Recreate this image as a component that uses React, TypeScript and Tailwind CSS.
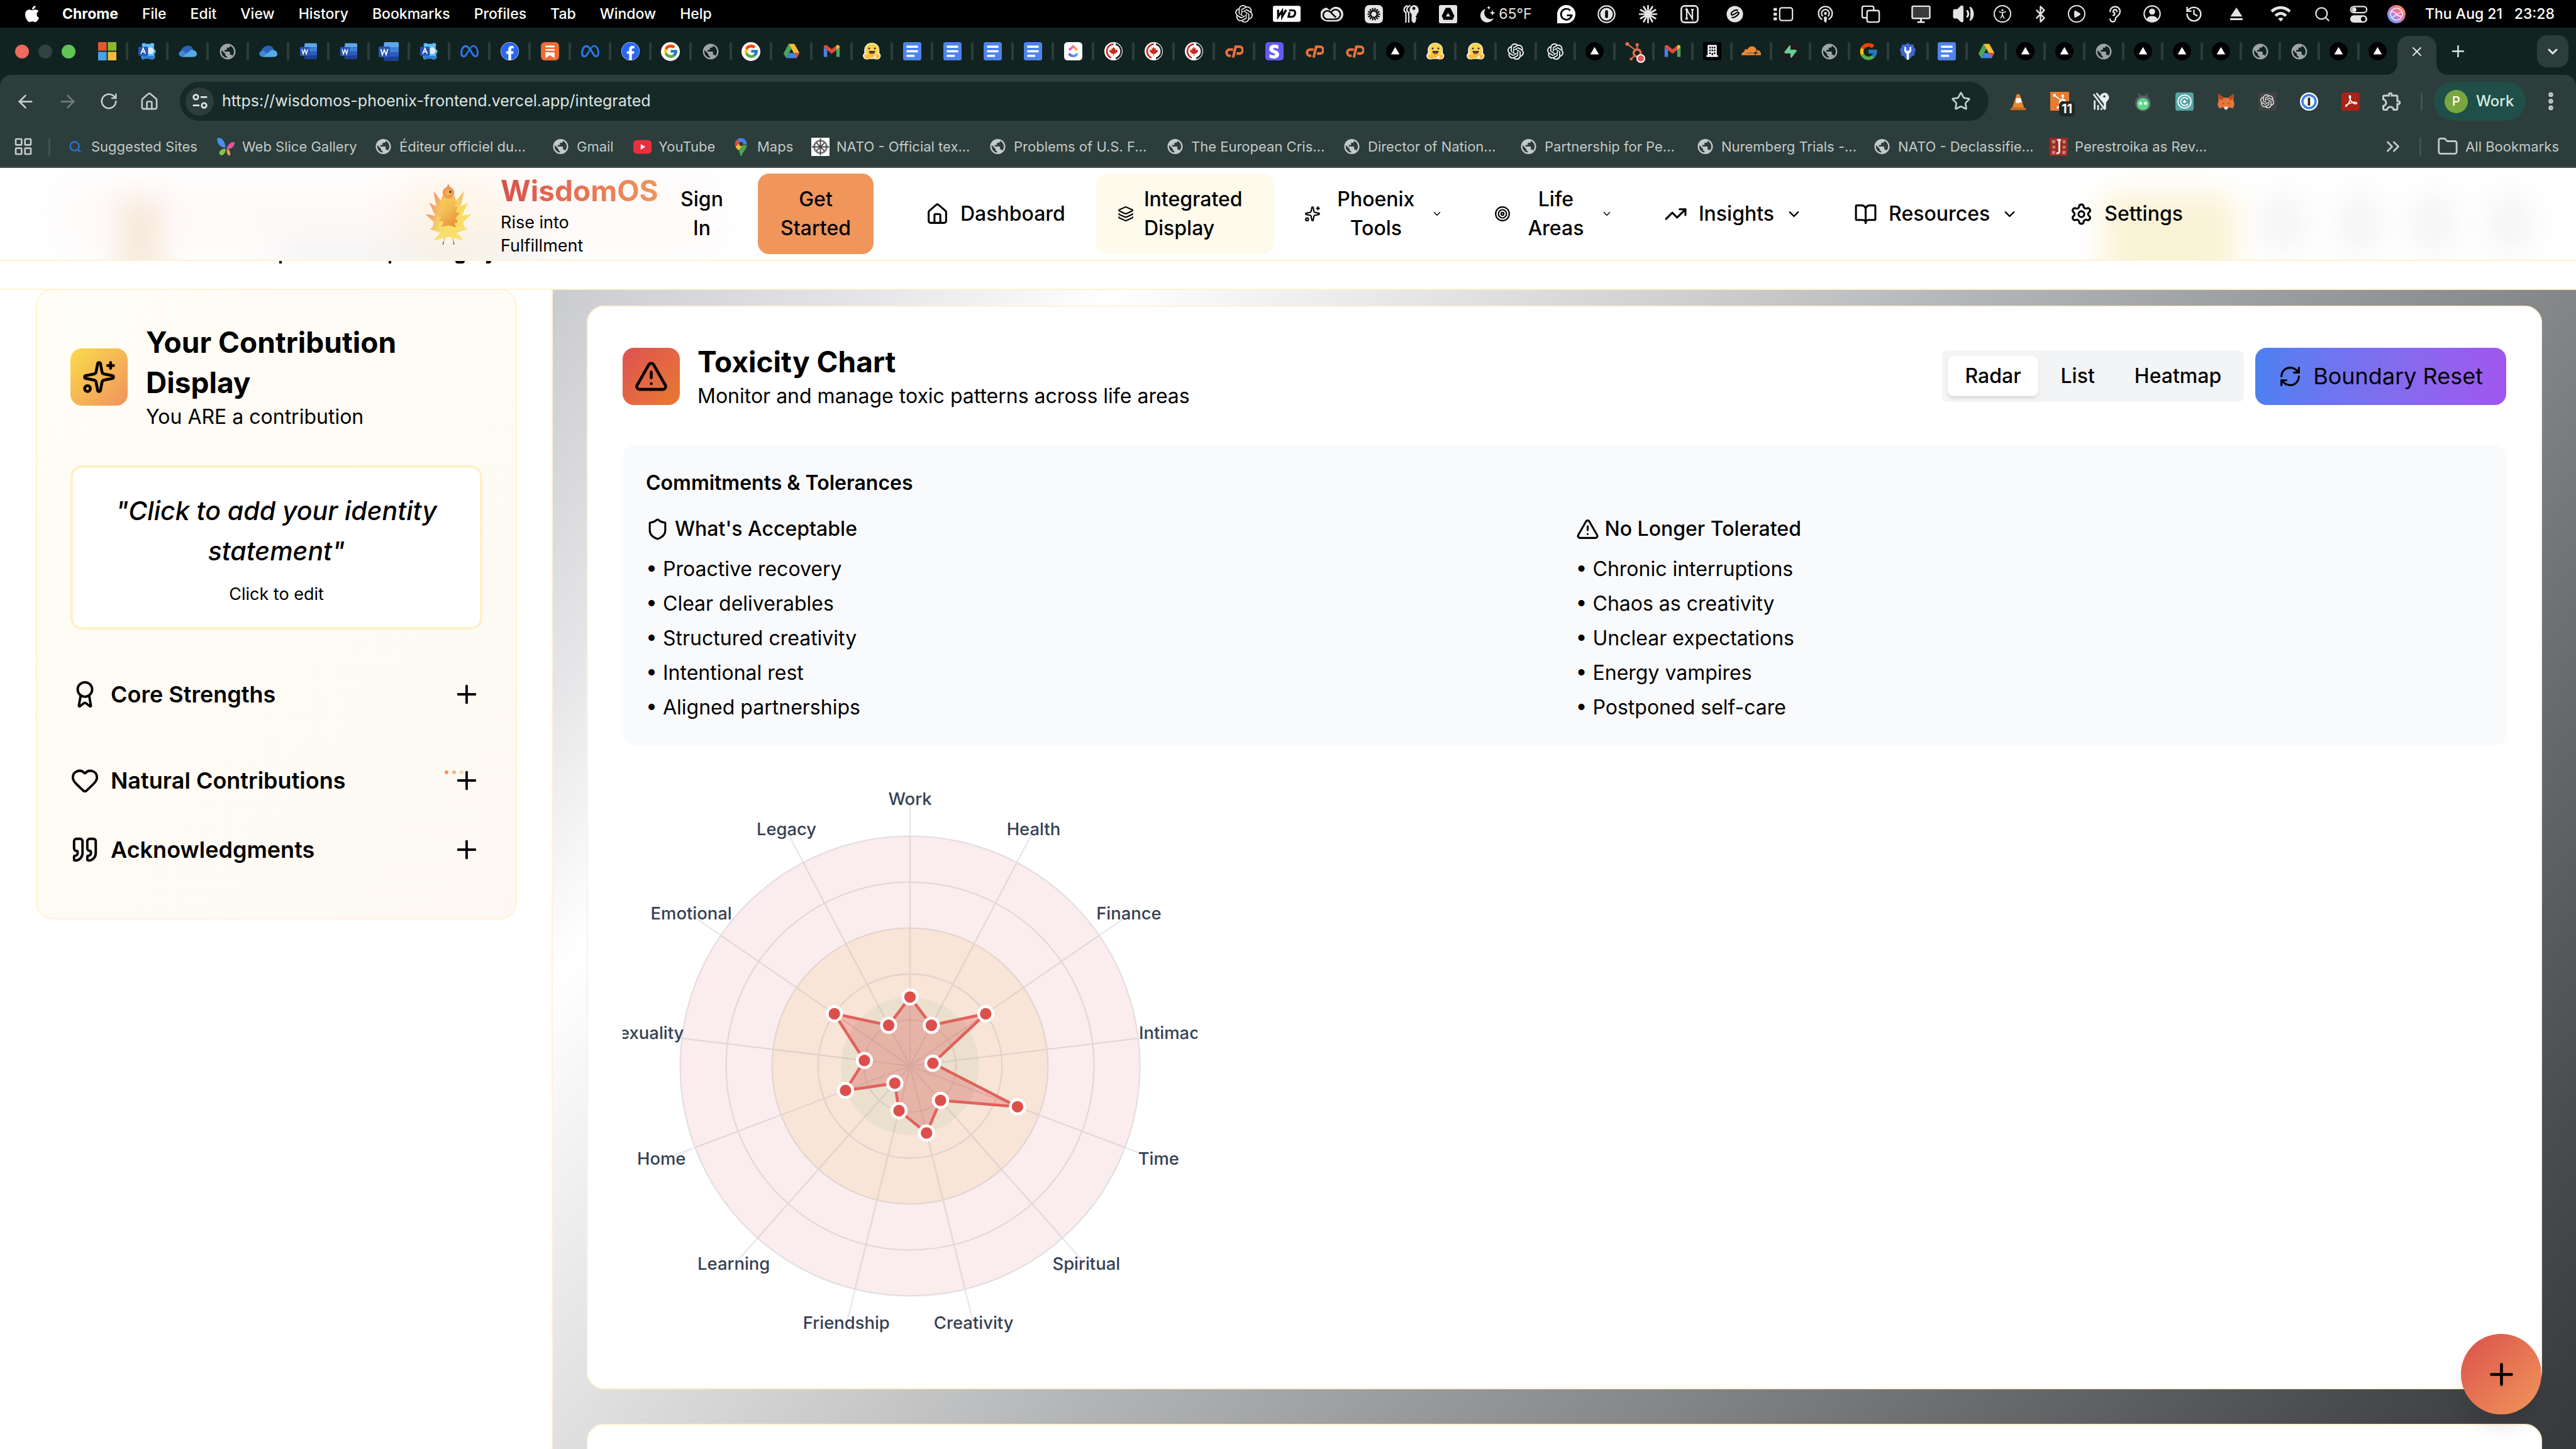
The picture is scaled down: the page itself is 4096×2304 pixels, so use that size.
import React from 'react';
import {
  ArrowLeft, ArrowRight, RotateCw, House, Star, EllipsisVertical, Folder, ChevronsRight, ChevronDown,
  Plus, X, Layers, Sparkles, Target, TrendingUp, BookOpen, Settings, TriangleAlert, RefreshCw, Shield, Award,
  Heart, Quote, Podcast, Volume2, PersonStanding, Bluetooth, Play, Ear, History, Search, LayoutGrid,
} from 'lucide-react';
import { FaApple, FaFacebook, FaStripeS, FaHubspot, FaCloudflare } from 'react-icons/fa';
import { FaMeta } from 'react-icons/fa6';
import { FcGoogle } from 'react-icons/fc';
import { SiOpenai, SiSupabase } from 'react-icons/si';
import { MdPublic, MdEject, MdOutlineExtension } from 'react-icons/md';

/* ---------- favicons ---------- */

const Svg = ({ children, className = 'size-[29px]' }: { children: React.ReactNode; className?: string }) => (
  <svg viewBox="0 0 32 32" className={className} aria-hidden="true">{children}</svg>
);

const Microsoft = () => (
  <Svg><path fill="#e2592f" d="M0 0h15v15H0z" /><path fill="#8bb832" d="M17 0h15v15H17z" /><path fill="#4aa0ec" d="M0 17h15v15H0z" /><path fill="#f6b93b" d="M17 17h15v15H17z" /></Svg>
);
const Autopilot = () => (
  <Svg>
    <path fill="#5fc0f4" d="M6 3l4-2 3 2h8l3-2 4 2-1 8 4 5-3 5 1 7-5 3-4-2h-8l-4 2-3-4 1-7-2-4 3-5z" />
    <path fill="#2f7fd6" d="M8 24h19l1 4-5 3-4-2h-8l-4 2-2-3z" />
    <circle cx="21" cy="15" r="6" fill="#dfeaf4" />
    <rect y="8" width="17" height="16" rx="2" fill="#2455b5" />
    <path d="M4.500 20.500l4-10 4 10M6 17h5" fill="none" stroke="#fff" strokeWidth="1.800" />
  </Svg>
);
const OneDrive = () => (
  <Svg>
    <path fill="#2b63b8" d="M3 17c2-7 8-11 14-11 5 0 8 4 9 8l-10 8z" />
    <path fill="#3f86d8" d="M0 20a7 7 0 0 1 8-5l14 11H7a7 7 0 0 1-7-6z" />
    <path fill="#55abe8" d="M7 26l14-12c6-1 11 2 11 7 0 3-3 5-6 5z" />
  </Svg>
);
const Globe = () => <MdPublic className="size-[30px] text-[#9ea3a6]" />;
const Word = ({ big }: { big?: boolean }) => (
  <Svg className={big ? 'size-[32px]' : 'size-[27px]'}>
    <path fill="#5ea7ea" d="M9 1h21a2 2 0 0 1 2 2v6H8z" /><path fill="#3f7fd4" d="M8 9h24v8H8z" /><path fill="#2c5cc0" d="M8 17h24v7H8z" /><path fill="#1e4094" d="M8 24h24v5a2 2 0 0 1-2 2H10a2 2 0 0 1-2-2z" />
    <rect y="8" width="18" height="17" rx="2" fill="#2455b5" />
    <path d="M3.500 12l2.500 9 3-8 3 8 2.500-9" fill="none" stroke="#fff" strokeWidth="1.800" />
  </Svg>
);
const Meta = () => <FaMeta className="size-[29px] text-[#2f74ee]" />;
const Facebook = () => <span className="rounded-full bg-white"><FaFacebook className="size-[29px] text-[#2a66f4]" /></span>;
const Substack = () => (
  <Svg><rect width="32" height="32" rx="7" fill="#ef6c34" /><path fill="#fff" d="M8 6h16v3H8zM8 12h16v3H8zM8 18h16v10l-8-5-8 5z" /></Svg>
);
const Google = () => <span className="flex size-[30px] items-center justify-center rounded-full bg-white"><FcGoogle className="size-[25px]" /></span>;
const GoogleBare = () => <FcGoogle className="size-[32px]" />;
const Drive = () => (
  <Svg><path fill="#4aa45a" d="M11 3l5 8.500L7 28 2 20z" /><path fill="#f5bf2f" d="M11 3h10l9 16H20z" /><path fill="#4a7fe8" d="M12 19h18l-5 9H7z" /><path fill="#dc4c3e" d="M21 19h9l-5 9z" /></Svg>
);
const Gmail = () => (
  <Svg><path fill="#4a80ec" d="M2 9v17h6V14z" /><path fill="#4aa45a" d="M30 9v17h-6V14z" /><path fill="#dc4c3e" d="M2 9c0-4 4-5 6-3l8 6.500L24 6v8l-8 6.500L8 14z" /><path fill="#f5bf2f" d="M24 6c2-2 6-1 6 3l-6 5z" /></Svg>
);
const Hugging = () => (
  <Svg>
    <path fill="#fff" d="M16 1a13 13 0 0 1 13 13c0 2 0 4-.500 5 3 2 3.500 5 2 8-2 4-8 4-11 2.500h-7C9 31 3 31 1 27c-1.500-3-1-6 2-8-.500-1-.500-3-.500-5A13 13 0 0 1 16 1z" />
    <circle cx="16" cy="14" r="12" fill="#fbd34c" />
    <path fill="#f8bd45" d="M2 24c0-3 3-4 5-2l3-1c3 1 4 5 2 8-3 2-9 1-10-5zM30 24c0-3-3-4-5-2l-3-1c-3 1-4 5-2 8 3 2 9 1 10-5zM9 20h14v8H9z" />
    <path d="M10.500 15.500a5.500 5.500 0 0 0 11 0z" fill="#3a3030" /><path d="M13.500 19q2.500-2 5 0-2.500 2-5 0z" fill="#e5484d" />
    <circle cx="11" cy="11" r="1.700" fill="#3a3030" /><circle cx="21" cy="11" r="1.700" fill="#3a3030" />
  </Svg>
);
const Docs = () => (
  <Svg><rect width="32" height="32" rx="4" fill="#4f83ec" /><path fill="#fff" d="M6 6h20v4H6zM6 14h20v4H6zM6 22h14v4H6z" /></Svg>
);
const ClickUp = () => (
  <Svg>
    <defs>
      <linearGradient id="cu1"><stop stopColor="#e642c8" /><stop offset="1" stopColor="#f8b63c" /></linearGradient>
      <linearGradient id="cu2"><stop stopColor="#7a4cf0" /><stop offset="1" stopColor="#4fb8f5" /></linearGradient>
    </defs>
    <rect width="32" height="32" rx="6" fill="#fff" />
    <path d="M9 14l7-6.500 7 6.500" fill="none" stroke="url(#cu1)" strokeWidth="4" /><path d="M8.500 20c4 6 11 6 15 0" fill="none" stroke="url(#cu2)" strokeWidth="4" />
  </Svg>
);
const Maple = () => (
  <Svg>
    <circle cx="16" cy="16" r="16" fill="#fff" /><path d="M20 3.500a13 13 0 0 1 0 25" fill="none" stroke="#222" strokeWidth="3" /><path d="M16 3.500a12.500 12.500 0 0 0-4 24" fill="none" stroke="#c8281f" strokeWidth="3" />
    <path fill="#c8281f" d="M16 8l2 3.500 2-1-1 4 3-1.500 1.500 3-4.500 4.500h-2.500V24h-1v-3.500H13L8.500 16l1.500-3 3 1.500-1-4 2 1z" />
  </Svg>
);
const CPanel = () => (
  <Svg><path d="M14 13H8a5.500 5.500 0 0 0 0 11h2M14 27l4.500-19H25a5 5 0 0 1 0 12h-5" fill="none" stroke="#ed723b" strokeWidth="4.500" /></Svg>
);
const Stripe = () => <span className="flex size-[29px] items-center justify-center rounded-[5px] bg-[#635bf5]"><FaStripeS className="size-[22px] text-white" /></span>;
const Vercel = () => (
  <Svg><circle cx="16" cy="16" r="16" fill="#000" /><path fill="#fff" d="M16 8.500l7.500 13h-15z" /></Svg>
);
const OpenAi = () => <SiOpenai className="size-[26px] text-white" />;
const HubSpot = () => (
  <span className="relative"><FaHubspot className="size-[29px] text-[#e2714c]" /><span className="absolute -right-1 -bottom-1 size-3.5 rounded-full border-2 border-white bg-[#e05656]" /></span>
);
const Building = () => (
  <Svg><path fill="#000" d="M0 0h32v32H0z" /><path fill="#fff" d="M8 5h16v18h2v3H6v-3h2z" /><path fill="#000" d="M11 8h2.500v3H11zM15 8h2.500v3H15zM19 8h2.500v3H19zM11 13h2.500v3H11zM15 13h2.500v3H15zM19 13h2.500v3H19zM11 18h2.500v3H11zM19 18h2.500v3H19zM15 19h2.500v4H15z" /></Svg>
);
const Cloudflare = () => <FaCloudflare className="size-[31px] text-[#e8893a]" />;
const Supabase = () => <span className="flex size-[29px] items-center justify-center rounded-[4px] bg-[#1c1c1c]"><SiSupabase className="size-[20px] text-[#63cf92]" /></span>;
const Wrench = () => (
  <Svg><path fill="#3f66cf" d="M16 1l4 3 6 0 1 5 3 4-2 5 0 5-5 2-3 4H12l-3-4-5-2 0-5-2-5 3-4 1-5h6z" /><path fill="#fff" d="M10 8v7a6 6 0 0 0 4 5v11h4V20a6 6 0 0 0 4-5V8l-3 1v6h-6V9z" /></Svg>
);

const leftTabs = [
  Microsoft, Autopilot, OneDrive, Globe, OneDrive, Word, Word, () => <Word big />, Autopilot, Meta, Facebook, Substack,
  Meta, Facebook, Google, Globe, Google, Drive, Gmail, Hugging, Docs, Docs, Docs, Docs, ClickUp, Maple, Maple, Maple,
  CPanel, Stripe, CPanel, CPanel, Vercel, Hugging, Hugging, OpenAi,
];
const rightTabs = [
  OpenAi, Vercel, HubSpot, Gmail, Building, Cloudflare, Supabase, Globe, GoogleBare, Wrench, Docs, Drive, Vercel, Vercel,
  Globe, Vercel, Vercel, Vercel, Globe, Globe, Vercel, Vercel,
];

/* ---------- macOS menu bar ---------- */

const lt = '#e4e4e4';
const spokes = (n: number, inner: number, outer: number) =>
  Array.from({ length: n }, (_, i) => {
    const a = (i / n) * Math.PI * 2;
    return `M${16 + inner * Math.cos(a)} ${16 + inner * Math.sin(a)}L${16 + outer * Math.cos(a)} ${16 + outer * Math.sin(a)}`;
  }).join('');

const menuIcons: { w: string; el: React.ReactNode }[] = [
  { w: 'w-15', el: <SiOpenai className="size-[28px]" /> },
  {
    w: 'w-19', el: (
      <svg viewBox="0 0 48 28" className="h-[26px] w-[44px]" aria-hidden="true"><rect width="48" height="28" rx="3" fill="#fff" />
        <path d="M9 7l0 12 7-10 0 10 7-12M28 8h7c6 0 4 11-2 11h-6l2-8" fill="none" stroke="#000" strokeWidth="3.500" /></svg>
    ),
  },
  {
    w: 'w-17', el: (
      <svg viewBox="0 0 40 30" className="h-[27px] w-[36px]" fill="none" aria-hidden="true">
        <path d="M11 3.500A11.500 11.500 0 0 0 12 28h15a13 13 0 1 0-11-20c-2-2-4-3-5-4.500z" fill={lt} />
        <path d="M17 24h-5a7.500 7.500 0 1 1 5-13l10 10M16 24h10a8.500 8.500 0 1 0-7-13" stroke="#000" strokeWidth="2.600" />
      </svg>
    ),
  },
  { w: 'w-16', el: <Svg><rect width="32" height="32" rx="8" fill={lt} /><path d={spokes(14, 4.500, 11)} stroke="#000" strokeWidth="2.400" /></Svg> },
  {
    w: 'w-14', el: (
      <Svg><g fill="none" stroke={lt} strokeWidth="2.500"><path d="M9 1C2 3 1 11 6 13v18M14 1C7 3 6 11 11 13v18" /></g>
        <path fill={lt} d="M20 0a9 9 0 0 1 5 16v2l-2 2.500 2 3-2 3 1 2-4 3.500-4-4V16a9 9 0 0 1 4-16z" /><circle cx="20" cy="6" r="2.600" fill="#000" /></Svg>
    ),
  },
  { w: 'w-15', el: <Svg><rect width="32" height="32" rx="3" fill={lt} /><path fill="#000" d="M12 5h8l7 14-3 7H8l-3-7z" /><path fill={lt} d="M16 14l4 6h-8z" /></Svg> },
  {
    w: 'w-31', el: (
      <span className="flex items-center gap-1">
        <Svg className="size-[27px]"><path fill={lt} d="M12 6a13 13 0 1 0 15 18A12 12 0 0 1 12 6z" /><path fill={lt} d="M25 8l1.500 4 4 1.500-4 1.500L25 19l-1.500-4-4-1.500 4-1.500zM18 0l1 2.500L21.500 4 19 5l-1 3-1-3-2.500-1L17 2.500z" /></Svg>
        <span>65°F</span>
      </span>
    ),
  },
  {
    w: 'w-17', el: (
      <Svg><path fill="#fff" d="M16 0a16 16 0 1 1 0 32H0V16A16 16 0 0 1 16 0z" /><path d="M23 9.500A9.500 9.500 0 1 0 25.500 18H17" fill="none" stroke="#000" strokeWidth="3" /></Svg>
    ),
  },
  { w: 'w-15', el: <Svg><circle cx="16" cy="16" r="14.500" fill="none" stroke={lt} strokeWidth="2.500" /><circle cx="16" cy="16" r="11" fill={lt} /><rect x="13.500" y="9" width="5" height="14" rx="2" fill="#000" /></Svg> },
  { w: 'w-18', el: <Svg><path d={spokes(12, 1, 15)} stroke={lt} strokeWidth="3" strokeLinecap="round" /></Svg> },
  { w: 'w-15', el: <Svg><rect x="1.500" y="1.500" width="29" height="29" rx="6" fill="none" stroke={lt} strokeWidth="3" /><path d="M11 24V8l10 16V8M8.500 8h5M18.500 8h5M8.500 24h5" fill="none" stroke={lt} strokeWidth="2.600" /></Svg> },
  { w: 'w-21', el: <Svg className="size-[27px]"><circle cx="16" cy="16" r="15.500" fill={lt} /><path d="M22 9c-4-2-8 0-11 3s-2 7 2 5l7-4c3-2 5 1 2 4s-7 7-12 5" fill="none" stroke="#000" strokeWidth="2.500" /></Svg> },
  { w: 'w-18', el: <svg viewBox="0 0 36 26" className="h-[23px] w-[32px]" aria-hidden="true"><rect x="11" y="1.500" width="23" height="23" rx="4" fill="none" stroke={lt} strokeWidth="2.500" /><path fill={lt} d="M0 2h6v5H0zM0 10.500h6v5H0zM0 19h6v5H0z" /></svg> },
  { w: 'w-15', el: <Podcast className="size-[29px]" /> },
  { w: 'w-21', el: <Svg className="size-[31px]"><rect x="2" y="3" width="19" height="19" rx="3" fill="none" stroke={lt} strokeWidth="2.500" /><rect x="10" y="10" width="20" height="19" rx="3" fill="#000" stroke={lt} strokeWidth="2.500" /></Svg> },
  { w: 'w-19', el: <Svg className="size-[31px]"><rect x="1.500" y="3" width="29" height="20" rx="2" fill="#3a3a3a" stroke={lt} strokeWidth="2.500" /><path d="M10 29h12M16 23v6" stroke={lt} strokeWidth="3" /></Svg> },
  { w: 'w-15', el: <Volume2 className="size-[36px] fill-[#e4e4e4]" /> },
  { w: 'w-16', el: <span className="flex size-[28px] items-center justify-center rounded-full border-2 border-[#e4e4e4]"><PersonStanding className="size-[20px]" /></span> },
  { w: 'w-14', el: <Bluetooth className="size-[29px]" /> },
  { w: 'w-15', el: <span className="flex size-[28px] items-center justify-center rounded-full border-2 border-[#e4e4e4]"><Play className="size-[13px] fill-[#e4e4e4]" /></span> },
  { w: 'w-15', el: <Ear className="size-[29px]" /> },
  { w: 'w-15', el: <Svg className="size-[28px]"><circle cx="16" cy="16" r="14.500" fill="none" stroke={lt} strokeWidth="2.500" /><circle cx="16" cy="12" r="5.500" fill={lt} /><path fill={lt} d="M6 26c2-8 18-8 20 0a14 14 0 0 1-20 0z" /></Svg> },
  { w: 'w-18', el: <History className="size-[29px]" /> },
  { w: 'w-16', el: <MdEject className="size-[34px]" /> },
  { w: 'w-19', el: <Svg className="size-[33px]"><g fill="none" stroke={lt} strokeWidth="4.500"><path d="M2 12c8-8 20-8 28 0" /><path d="M8 18.500c5-5 11-5 16 0" /></g><path fill={lt} d="M12 23c2-2 6-2 8 0l-4 4.500z" /></Svg> },
  { w: 'w-14', el: <Search className="size-[27px]" /> },
  { w: 'w-15', el: <Svg className="size-[29px]"><rect x="2" y="2.500" width="28" height="11" rx="5.500" fill="none" stroke={lt} strokeWidth="2.500" /><circle cx="8" cy="8" r="4" fill={lt} /><rect x="1" y="18" width="30" height="13" rx="6.500" fill={lt} /><circle cx="24" cy="24.500" r="4" fill="#000" /></Svg> },
  {
    w: 'w-15', el: (
      <Svg className="size-[29px]">
        <defs><linearGradient id="siri" x1="0" y1="1" x2="1" y2="0"><stop stopColor="#3fb0f0" /><stop offset=".35" stopColor="#a98ae8" /><stop offset=".6" stopColor="#ee6f9c" /><stop offset="1" stopColor="#f5a742" /></linearGradient></defs>
        <circle cx="16" cy="16" r="16" fill="url(#siri)" /><circle cx="16" cy="16" r="10.500" fill="none" stroke="#fff" strokeWidth="1.800" opacity=".85" /><path d="M7 12c5-2 7 2 9 4s6 5 9 3M8 22c4-1 11-10 17-9" fill="none" stroke="#fff" strokeWidth="1.800" opacity=".85" />
      </Svg>
    ),
  },
];

const MenuBar = () => (
  <div className="flex h-[44px] shrink-0 items-center bg-black pr-[34px] pl-[36px] text-[23px] leading-8 text-white">
    <FaApple className="mr-[33px] size-[30px]" />
    <nav aria-label="Menu bar" className="flex gap-[38px]">
      <button className="font-bold">Chrome</button>
      {['File', 'Edit', 'View', 'History', 'Bookmarks', 'Profiles', 'Tab', 'Window', 'Help'].map((m) => <button key={m} className="font-medium">{m}</button>)}
    </nav>
    <div className="ml-auto flex items-center text-[#e4e4e4]">
      {menuIcons.map(({ w, el }, i) => <span key={i} className={`flex shrink-0 items-center justify-center ${w}`}>{el}</span>)}
      <span className="ml-4 flex w-[206px] justify-between font-medium whitespace-nowrap text-white"><span>Thu Aug 21</span><span>23:28</span></span>
    </div>
  </div>
);

/* ---------- browser chrome ---------- */

const TabStrip = () => (
  <div className="flex h-[75px] shrink-0 items-center bg-[#112321]">
    <div className="flex w-[138px] items-center gap-[15px] pl-[24px]">
      <span className="size-[22px] rounded-full bg-[#ed6a5e]" />
      <span className="size-[22px] rounded-full bg-[#33413f]" />
      <span className="size-[22px] rounded-full bg-[#61c554]" />
    </div>
    {leftTabs.map((Icon, i) => (
      <span key={i} className="relative flex w-16 shrink-0 items-center justify-center"><Icon /><span className="absolute -right-0.5 h-[29px] w-1 rounded-full bg-[#2c3d3b]" /></span>
    ))}
    <div className="flex flex-1 items-center">
      {rightTabs.map((Icon, i) => (
        <span key={i} className="relative flex flex-1 items-center justify-center"><Icon />{i < rightTabs.length - 1 && <span className="absolute -right-0.5 h-[29px] w-1 rounded-full bg-[#2c3d3b]" />}</span>
      ))}
    </div>
    <div className="flex w-[284px] shrink-0 items-center self-stretch text-[#dfe9e6]">
      <div className="relative mt-[13px] flex w-[62px] items-center justify-center self-stretch rounded-t-[18px] bg-[#2c3d3b] pb-3">
        <span className="absolute bottom-0 -left-[18px] size-[18px] bg-[radial-gradient(circle_at_top_left,transparent_18px,#2c3d3b_18px)]" />
        <span className="absolute -right-[18px] bottom-0 size-[18px] bg-[radial-gradient(circle_at_top_right,transparent_18px,#2c3d3b_18px)]" />
        <button aria-label="Close tab"><X className="size-[24px]" /></button>
      </div>
      <button aria-label="New tab" className="ml-[20px]"><Plus className="size-[29px]" /></button>
      <button aria-label="Search tabs" className="mr-[12px] ml-auto flex h-[51px] w-[50px] items-center justify-center rounded-[16px] bg-[#2c3d3b]"><ChevronDown className="size-[24px]" strokeWidth={3} /></button>
    </div>
  </div>
);

const extensions: [string, React.ReactNode][] = [
  ['VLC', <Svg><path fill="#e8872e" d="M13 3h5l8 24H5z" /><path fill="#fff" d="M12 10h8l2 7-9 2-2-3z" /><path fill="#c9691e" d="M2 27h27v4H2z" /></Svg>],
  ['HubSpot', <span className="relative flex size-[30px] items-center justify-center bg-[#e97b2e]"><FaHubspot className="size-[24px] text-white" /><span className="absolute top-[15px] left-[14px] rounded-[6px] bg-[#1c2826] px-1 text-[20px] leading-6 font-bold text-white">11</span></span>],
  ['Passwords', <Svg><path fill="#e8eeec" d="M19 1a8 8 0 0 1 7 14l-2 3v11l-4 2V18l-6-6A8 8 0 0 1 19 1z" /><path d="M2 3l20 27M7 1l16 20M4 14v16M10 22v9M16 27v4" stroke="#e8eeec" strokeWidth="3" fill="none" /><circle cx="21" cy="7" r="2" fill="#2c3d3b" /></Svg>],
  ['Android helper', <Svg className="size-[31px]"><path d="M9 3l3 6M23 3l-3 6" stroke="#55616e" strokeWidth="2.500" /><circle cx="16" cy="19" r="13" fill="#55616e" /><circle cx="16" cy="20" r="10" fill="#62d487" /><circle cx="12" cy="19" r="2.500" fill="#fff" /><circle cx="20" cy="19" r="2.500" fill="#fff" /></Svg>],
  ['Recorder', <Svg><rect width="32" height="32" rx="4" fill="#56a3a6" /><circle cx="16" cy="16" r="11.500" fill="none" stroke="#fff" strokeWidth="2" /><path d="M22 12a7 7 0 1 0 0 8" fill="none" stroke="#fff" strokeWidth="2" /><circle cx="16" cy="16" r="2.500" fill="#fff" /></Svg>],
  ['MetaMask', <Svg><path fill="#e8753c" d="M2 2l10 7h8l10-7-1 13 2 6-3 7-7-2-3 3h-4l-3-3-7 2-3-7 2-6z" /><path fill="#b84a20" d="M2 2l10 7-3 5-6-3zM30 2l-10 7 3 5 6-3zM10 17l4 3-4 1zM22 17l-4 3 4 1z" /><path fill="#e9e3dc" d="M12 25h8l-2 5h-4z" /></Svg>],
  ['ChatGPT', <span className="flex size-[29px] items-center justify-center bg-[#424242]"><SiOpenai className="size-[22px] text-[#e6e6e6]" /></span>],
  ['1Password', <Svg><circle cx="16" cy="16" r="16" fill="#fff" /><circle cx="16" cy="16" r="11.500" fill="#fff" stroke="#3c83ea" strokeWidth="4" /><path fill="#222" d="M14 9h4v14h-4z" /></Svg>],
  ['Acrobat', <Svg><rect width="32" height="32" rx="4" fill="#a62418" /><path d="M7 25c4-2 9-10 9-17 0-3-3-3-2 0 1 6 6 12 11 12 3 0 2-3-1-3-6 0-12 3-17 6" fill="none" stroke="#fff" strokeWidth="2" /></Svg>],
];

const Toolbar = () => (
  <div className="flex h-[84px] shrink-0 items-center pl-[24px] text-[#c3cfcb]">
    <div className="flex w-[262px] gap-[34px]">
      <button aria-label="Back"><ArrowLeft className="size-[33px]" /></button>
      <button aria-label="Forward" className="text-[#6f7d7a]"><ArrowRight className="size-[33px]" /></button>
      <button aria-label="Reload"><RotateCw className="size-[30px]" /></button>
      <button aria-label="Home"><House className="size-[31px]" /></button>
    </div>
    <div className="flex h-[62px] flex-1 items-center rounded-full bg-[#172927] pr-[28px] pl-[9px]">
      <button aria-label="Site information" className="flex size-[45px] items-center justify-center rounded-full bg-[#2c3d3b]">
        <Svg className="size-[30px]"><g fill="none" stroke="#dfe7e4" strokeWidth="3"><circle cx="9" cy="9" r="4" /><path d="M17 9h11M4 23h11" /><circle cx="23" cy="23" r="4" /></g></Svg>
      </button>
      <input aria-label="Address" defaultValue="https://wisdomos-phoenix-frontend.vercel.app/integrated" className="ml-[13px] min-w-0 flex-1 bg-transparent text-[25px] text-[#dde4e2] outline-none" />
      <button aria-label="Bookmark this tab"><Star className="size-[32px]" /></button>
    </div>
    <div className="ml-[14px] flex items-center">
      {extensions.map(([name, el]) => <button key={name} aria-label={name} className="flex w-[66px] items-center justify-center">{el}</button>)}
      <button aria-label="Extensions" className="flex w-[66px] items-center justify-center"><MdOutlineExtension className="size-[36px]" /></button>
    </div>
    <span className="ml-[13px] h-[29px] w-[3px] rounded-full bg-[#43534f]" />
    <button className="ml-[18px] flex h-[62px] w-[146px] items-center gap-[13px] rounded-full bg-[#204e48] pl-[17px] text-[24px] font-medium text-[#d5ebe5]">
      <span className="flex size-[37px] items-center justify-center rounded-full bg-[#7aa63f] text-[20px] text-white">P</span>Work
    </button>
    <button aria-label="More" className="mx-[22px]"><EllipsisVertical className="size-[36px]" strokeWidth={3} /></button>
  </div>
);

const PageGlobe = () => <MdPublic className="size-[30px] text-[#c3c8c8]" />;
const bookmarks: { w: string; label: string; icon: React.ReactNode }[] = [
  { w: 'w-[240px]', label: 'Suggested Sites', icon: <Search className="size-[21px] text-[#2f6fcf]" strokeWidth={3} /> },
  { w: 'w-[250px]', label: 'Web Slice Gallery', icon: <Svg><path fill="#4a90e8" d="M0 2c5-5 14 2 15 15-7 1-14-4-15-15z" /><path fill="#e0559a" d="M31 8c-6-2-13 4-14 12 8 1 14-5 14-12z" /><path fill="#8bc34a" d="M4 28c0-6 5-9 11-9 1 6-3 12-8 12z" /><path fill="#f0a048" d="M17 20c5 0 7 5 6 11-4 1-6-4-6-11z" /></Svg> },
  { w: 'w-[282px]', label: 'Éditeur officiel du...', icon: <PageGlobe /> },
  { w: 'w-[130px]', label: 'Gmail', icon: <PageGlobe /> },
  { w: 'w-[157px]', label: 'YouTube', icon: <Svg><rect y="4" width="32" height="24" rx="6" fill="#e8303c" /><path fill="#fff" d="M13 11l8 5-8 5z" /></Svg> },
  { w: 'w-[126px]', label: 'Maps', icon: <Svg><path fill="#4aa45a" d="M6 16l6 6 3 10h2c1-8 9-11 9-20z" /><path fill="#f5bf2f" d="M6 16l5 6 9-10-9-2z" /><path fill="#dc4c3e" d="M6 16C4 10 6 5 9 3l5 6z" /><path fill="#4a80ec" d="M9 3c6-5 16-2 17 8l-10 1z" /><circle cx="16" cy="11" r="3.500" fill="#2c3d3b" /></Svg> },
  { w: 'w-[282px]', label: 'NATO - Official tex...', icon: <Svg><path fill="#fff" d="M0 0h32v32H0z" /><circle cx="16" cy="16" r="11" fill="none" stroke="#777" strokeWidth="3" /><path d="M16 1v30M1 16h30M9 9l14 14M23 9L9 23" stroke="#444" strokeWidth="2" /></Svg> },
  { w: 'w-[282px]', label: 'Problems of U.S. F...', icon: <PageGlobe /> },
  { w: 'w-[281px]', label: 'The European Cris...', icon: <PageGlobe /> },
  { w: 'w-[281px]', label: 'Director of Nation...', icon: <PageGlobe /> },
  { w: 'w-[281px]', label: 'Partnership for Pe...', icon: <PageGlobe /> },
  { w: 'w-[281px]', label: 'Nuremberg Trials -...', icon: <PageGlobe /> },
  { w: 'w-[281px]', label: 'NATO - Declassifie...', icon: <PageGlobe /> },
  { w: 'w-[281px]', label: 'Perestroika as Rev...', icon: <Svg><path fill="#9c2a20" d="M0 0h32v32H0z" /><path d="M4 4h6v6H4zM5 14h5v5H5zM4 23h6v6H4zM23 4h5v6h-5zM23 14h5v5h-5zM22 23h6v6h-6z" fill="#c58078" /><path d="M13 4h7M17 4v20q0 4-5 3" stroke="#f3e3e0" strokeWidth="3.500" fill="none" /></Svg> },
];

const BookmarksBar = () => (
  <div className="flex h-[64px] shrink-0 items-center border-b-2 border-[#434e48] pr-[27px] pb-[2px] pl-[21px] text-[22px] text-[#c3c9c8]">
    <LayoutGrid className="size-[32px]" />
    <span className="mr-[25px] ml-[24px] h-[29px] w-[3px] rounded-full bg-[#43534f]" />
    <nav aria-label="Bookmarks" className="flex">
      {bookmarks.map((b) => (
        <a key={b.label} href="#bookmark" className={`flex items-center gap-[11px] whitespace-nowrap ${b.w}`}>
          <span className="flex w-[29px] shrink-0 justify-center">{b.icon}</span>{b.label}
        </a>
      ))}
    </nav>
    <button aria-label="More bookmarks" className="ml-auto"><ChevronsRight className="size-[34px]" /></button>
    <span className="mx-[25px] h-[29px] w-[3px] rounded-full bg-[#43534f]" />
    <button className="flex items-center gap-[11px] whitespace-nowrap"><Folder className="size-[34px]" />All Bookmarks</button>
  </div>
);

/* ---------- site header ---------- */

const Phoenix = () => (
  <svg viewBox="120 86 242 324" className="h-[99px] w-[74px]" aria-label="Phoenix">
    <defs>
      <linearGradient id="wing" x1="0" y1="0.200" x2="0.700" y2="0.750"><stop stopColor="#ee8070" /><stop offset=".5" stopColor="#f3b268" /><stop offset="1" stopColor="#f8e068" /></linearGradient>
      <linearGradient id="wingR" x1="0" y1="0" x2="0.300" y2="1"><stop stopColor="#f3b06a" /><stop offset=".5" stopColor="#f7dc62" /><stop offset="1" stopColor="#fae070" /></linearGradient>
      <linearGradient id="body" x1="0" y1="0" x2="0.700" y2="1"><stop stopColor="#f7d548" /><stop offset=".5" stopColor="#f2bb55" /><stop offset="1" stopColor="#ea8f38" /></linearGradient>
      <radialGradient id="head"><stop stopColor="#f5bb3c" /><stop offset="1" stopColor="#ee9058" /></radialGradient>
    </defs>
    <path fill="url(#wing)" d="M241 150L211 150L202 178L163 128L178 208L142 188L172 256L122 248L165 290L160 315L143 325L198 345L164 385L241 366z" />
    <path fill="url(#wingR)" d="M241 150L271 150L282 178L322 128L306 208L342 188L312 256L360 248L318 290L324 315L342 325L285 345L320 385L241 366z" />
    <path fill="url(#body)" d="M241 164L228 176L202 178L208 206L192 212L204 236L183 243L202 266L190 284L216 288L205 315L241 306L281 316L272 296L292 288L278 268L300 243L278 236L290 212L274 206L277 180L254 176z" />
    <path fill="#f0926a" d="M240 88L250 112L232 112z" />
    <circle cx="241" cy="136" r="30" fill="url(#head)" /><circle cx="251" cy="132" r="6" fill="#333a48" />
    <path d="M222 372l-6 20M262 372l5 20" stroke="#e8823c" strokeWidth="3" fill="none" /><path d="M216 392l-4 15M267 392l4 15" stroke="#444" strokeWidth="4" />
  </svg>
);

const navBase = 'flex h-[128px] items-center rounded-[18px] px-[34px] gap-[18px]';
const SiteHeader = () => (
  <header className="relative flex h-[148px] shrink-0 items-center overflow-hidden border-b-2 border-[#fff3d2] bg-white pl-[676px] text-[32px] leading-[46px] font-medium">
    <div aria-hidden="true" className="absolute inset-0">
      <div className="absolute top-6 left-24 h-28 w-[1040px] bg-[#fdf3f1] opacity-50 blur-[40px]" />
      <div className="absolute top-12 left-[188px] h-40 w-[70px] bg-[#f0d8bb] opacity-50 blur-[22px]" />
      <div className="absolute top-2 left-[620px] h-40 w-[200px] rounded-full bg-[#fff0d8] opacity-50 blur-[30px]" />
      <div className="absolute top-28 left-[440px] h-16 w-[420px] bg-[#d4dbdb] opacity-25 blur-[30px]" />
      <div className="absolute top-10 left-[3345px] h-40 w-[210px] bg-[#f7eab9] opacity-60 blur-[24px]" />
      <div className="absolute top-10 left-[3596px] flex gap-[50px]">
        {[0, 1, 2, 3].map((i) => <span key={i} className="h-24 w-[70px] rounded-full bg-[#e2e3e5] opacity-40 blur-[24px]" />)}
      </div>
    </div>
    <div className="relative flex items-center">
      <a href="#home" className="flex items-center gap-[46px]">
        <Phoenix />
        <span className="flex w-[247px] flex-col">
          <span className="w-fit bg-linear-to-r from-[#d94f4b] to-[#f0965b] bg-clip-text text-[46px] leading-[64px] font-bold text-transparent">WisdomOS</span>
          <span className="w-[160px] text-[27px] leading-[37px] font-normal">Rise into Fulfillment</span>
        </span>
      </a>
      <button className="ml-[38px] w-[70px]">Sign In</button>
      <button className="ml-[54px] h-[128px] w-[184px] rounded-[18px] bg-[#f0965b] px-7">Get Started</button>
      <nav aria-label="Main" className="ml-[49px] flex gap-[14px]">
        <a href="#dashboard" className={navBase}><House className="size-[37px]" />Dashboard</a>
        <a href="#integrated" className="flex h-[128px] w-[284px] items-center gap-[16px] rounded-[18px] bg-[#fffbec] pl-[35px]"><Layers className="size-[26px]" /><span className="w-[160px]">Integrated Display</span></a>
        <button className={navBase}><Sparkles className="size-[26px]" /><span className="mx-[5px] w-[130px]">Phoenix Tools</span><ChevronDown className="size-[18px]" /></button>
        <button className={navBase}><Target className="size-[26px]" /><span className="mx-[5px] w-[98px]">Life Areas</span><ChevronDown className="size-[18px]" /></button>
        <button className={navBase}><TrendingUp className="size-[37px]" />Insights<ChevronDown className="size-[27px]" /></button>
        <button className={navBase}><BookOpen className="size-[37px]" />Resources<ChevronDown className="size-[27px]" /></button>
        <a href="#settings" className={navBase}><Settings className="size-[37px]" />Settings</a>
      </nav>
    </div>
  </header>
);

/* ---------- sidebar ---------- */

const SidebarRow = ({ icon: Icon, label, children }: { icon: React.ElementType; label: string; children?: React.ReactNode }) => (
  <button className="relative flex h-[73px] w-full items-center gap-[18px] text-left text-[36px] font-semibold">
    <Icon className="size-[46px]" />{label}<Plus className="mr-[2px] ml-auto size-[46px]" />{children}
  </button>
);

const Sidebar = () => (
  <aside className="w-[879px] shrink-0 border-r-2 border-[#fff3d2] bg-white pr-[55px] pl-[57px]">
    <section className="-mt-[2px] h-[1003px] rounded-[27px] border-2 border-[#fff3d2] bg-linear-to-br from-[#fffdf5] to-[#fdf8f3] px-[53px] py-[51px]">
      <div className="flex items-center gap-[29px]">
        <span className="flex size-[91px] shrink-0 items-center justify-center rounded-[18px] bg-linear-to-br from-[#f9dc48] to-[#ef915c]"><Sparkles className="size-[55px]" /></span>
        <div>
          <h2 className="text-[46px] leading-[64px] font-bold">Your Contribution Display</h2>
          <p className="text-[32px] leading-[46px]">You ARE a contribution</p>
        </div>
      </div>
      <button className="mt-[54px] block w-full rounded-[18px] border-4 border-[#fdf1c6] bg-white px-[36px] pt-[36px] pb-[34px] text-center">
        <span className="block text-[41px] leading-[64px] font-medium italic">"Click to add your identity statement"</span>
        <span className="mt-[18px] block text-[27px] leading-[37px]">Click to edit</span>
      </button>
      <div className="mt-[66px]">
        <SidebarRow icon={Award} label="Core Strengths" />
        <div className="mt-[64px] mb-[37px]">
          <SidebarRow icon={Heart} label="Natural Contributions">
            <span aria-hidden="true" className="absolute top-[21px] right-[30px] flex gap-[6px]">
              <span className="size-[6px] rounded-full bg-[#f0965b]" /><span className="size-[6px] rounded-full bg-[#f0965b] opacity-70" /><span className="size-[6px] rounded-full bg-[#f0965b] opacity-35" />
            </span>
          </SidebarRow>
        </div>
        <SidebarRow icon={Quote} label="Acknowledgments" />
      </div>
    </section>
  </aside>
);

/* ---------- radar ---------- */

const areas: [string, number][] = [
  ['Work', 3], ['Health', 2], ['Finance', 4], ['Intimacy', 1], ['Time', 5], ['Spiritual', 2], ['Creativity', 3],
  ['Friendship', 2], ['Learning', 1], ['Home', 3], ['Sexuality', 2], ['Emotional', 4], ['Legacy', 2],
];
const at = (i: number, r: number): [number, number] => {
  const a = (i / areas.length) * Math.PI * 2 - Math.PI / 2;
  return [200 + r * Math.cos(a), 200 + r * Math.sin(a)];
};

const Radar = () => (
  <svg viewBox="0 0 400 400" className="size-[914px]" role="img" aria-label="Toxicity radar">
    <g fill="none" stroke="#e5e7eb">
      {[32, 64, 96, 128, 160].map((r) => <circle key={r} cx="200" cy="200" r={r} />)}
      {areas.map(([n], i) => { const [x, y] = at(i, 184); return <line key={n} x1="200" y1="200" x2={x} y2={y} />; })}
    </g>
    <circle cx="200" cy="200" r="160" fill="#dc4f4b" opacity=".1" />
    <circle cx="200" cy="200" r="96" fill="#f2b040" opacity=".12" />
    <circle cx="200" cy="200" r="48" fill="#77b576" opacity=".1" />
    <polygon points={areas.map(([, v], i) => at(i, v * 16).join(',')).join(' ')} fill="#dc4f4b" fillOpacity=".3" stroke="#e0625b" strokeWidth="2" />
    {areas.map(([n, v], i) => { const [x, y] = at(i, v * 16); return <circle key={n} cx={x} cy={y} r="5" fill="#dc4f4b" stroke="#fff" strokeWidth="2" />; })}
    {areas.map(([n], i) => { const [x, y] = at(i, 185); return <text key={n} x={x} y={y} textAnchor="middle" dominantBaseline="middle" className="fill-gray-700 text-[12px] font-medium">{n}</text>; })}
  </svg>
);

/* ---------- main ---------- */

const Tolerances = ({ icon: Icon, title, items }: { icon: React.ElementType; title: string; items: string[] }) => (
  <div>
    <h5 className="flex items-center gap-[9px] font-medium"><Icon className="size-[37px]" />{title}</h5>
    <ul className="mt-[18px] flex flex-col gap-[9px]">{items.map((t) => <li key={t}>• {t}</li>)}</ul>
  </div>
);

const card = 'rounded-[27px] border-2 border-[#fff3d2] bg-white';
const Main = () => (
  <main className="flex min-w-0 flex-1 flex-col gap-[55px] bg-[linear-gradient(129deg,#cacbcf_0%,#e6e6e8_11%,#ffffff_19%,#cbcbcb_40%,#b3b5b7_48%,#858687_68%,#4a4b4e_91%,#37383b_100%)] px-[54px] pt-[25px]">
    <section className={`${card} shrink-0 p-[55px]`}>
      <div className="flex items-center">
        <span className="flex size-[91px] items-center justify-center rounded-[18px] bg-linear-to-br from-[#de5150] to-[#e87a2e]"><TriangleAlert className="size-[55px]" /></span>
        <div className="ml-[28px]">
          <h2 className="text-[46px] leading-[64px] font-bold">Toxicity Chart</h2>
          <p className="text-[32px] leading-[46px]">Monitor and manage toxic patterns across life areas</p>
        </div>
        <div className="ml-auto flex gap-[9px] rounded-[9px] bg-gray-100 p-[9px] text-[32px] leading-[46px] font-medium">
          <button className="h-[64px] rounded-[9px] bg-white px-[27px] shadow-md">Radar</button>
          <button className="h-[64px] rounded-[9px] px-[27px]">List</button>
          <button className="h-[64px] rounded-[9px] px-[27px]">Heatmap</button>
        </div>
        <button className="ml-[18px] flex h-[91px] items-center gap-[18px] rounded-[18px] bg-linear-to-r from-[#4c80f0] to-[#a056ee] px-[37px] text-[36px]"><RefreshCw className="size-[37px]" />Boundary Reset</button>
      </div>
      <div className="mt-[55px] rounded-[18px] bg-[#f9fafc] p-[37px] text-[32px] leading-[46px]">
        <h4 className="font-semibold">Commitments &amp; Tolerances</h4>
        <div className="mt-[27px] grid grid-cols-2 gap-[36px]">
          <Tolerances icon={Shield} title="What's Acceptable" items={['Proactive recovery', 'Clear deliverables', 'Structured creativity', 'Intentional rest', 'Aligned partnerships']} />
          <Tolerances icon={TriangleAlert} title="No Longer Tolerated" items={['Chronic interruptions', 'Chaos as creativity', 'Unclear expectations', 'Energy vampires', 'Postponed self-care']} />
        </div>
      </div>
      <div className="mt-[53px] flex"><Radar /></div>
    </section>
    <section className={`${card} min-h-[300px] shrink-0`} />
  </main>
);

export default function App() {
  return (
    <div className="relative flex h-screen flex-col overflow-hidden bg-white font-['Inter','Liberation_Sans',sans-serif] text-black">
      <MenuBar />
      <TabStrip />
      <div className="shrink-0 bg-[#112321]">
        <div className="flex flex-col rounded-t-[18px] bg-[#2c3d3b]">
          <Toolbar />
          <BookmarksBar />
        </div>
      </div>
      <SiteHeader />
      <div className="h-[46px] shrink-0 border-b-2 border-[#fff3d2]">
        <div aria-hidden="true" className="flex h-1 pl-[444px]">
          <span className="mr-[170px] w-1 bg-black" />
          <span className="mr-[102px] w-1 bg-black" />
          <span className="mr-[34px] w-[15px] rounded-b-full bg-black" />
          <span className="w-[8px] rounded-br-full bg-black" />
        </div>
      </div>
      <div className="flex min-h-0 flex-1">
        <Sidebar />
        <Main />
      </div>
      <button aria-label="Add" className="absolute right-[55px] bottom-[55px] flex size-[128px] items-center justify-center rounded-full bg-linear-to-br from-[#d94f4b] to-[#f0965b] shadow-[0_23px_34px_-7px_rgba(0,0,0,0.12)]"><Plus className="size-[55px]" /></button>
    </div>
  );
}
